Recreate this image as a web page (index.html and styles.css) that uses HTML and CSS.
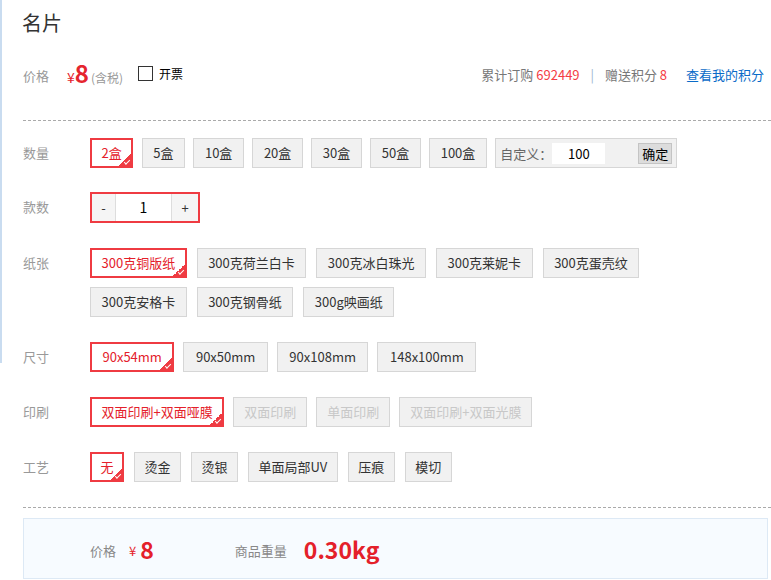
FILE: index.html
```html
<!DOCTYPE html>
<html lang="zh-CN">
<head>
    <meta charset="UTF-8">
    <meta name="viewport" content="width=device-width, initial-scale=1.0">
    <title>名片</title>
    <link rel="stylesheet" href="styles.css">
</head>
<body>
    <div class="page">
        <h1 class="title">名片</h1>

        <div class="summary">
            <span class="summary-label">价格</span>
            <span class="price"><i>¥</i><b>8</b><em>(含税)</em></span>
            <label class="invoice"><span class="checkbox"></span>开票</label>
            <div class="stats">
                累计订购 <span class="red">692449</span>
                <span class="sep">|</span>
                赠送积分 <span class="red">8</span>
                <a class="link" href="#">查看我的积分</a>
            </div>
        </div>

        <div class="divider"></div>

        <!-- 数量 -->
        <div class="opt-row first">
            <div class="opt-label">数量</div>
            <div class="opt-list qty">
                <span class="opt active">2盒</span>
                <span class="opt">5盒</span>
                <span class="opt">10盒</span>
                <span class="opt">20盒</span>
                <span class="opt">30盒</span>
                <span class="opt">50盒</span>
                <span class="opt">100盒</span>
                <div class="custom">
                    <span class="custom-label">自定义：</span>
                    <span class="custom-input">100</span>
                    <span class="custom-btn">确定</span>
                </div>
            </div>
        </div>

        <!-- 款数 -->
        <div class="opt-row second">
            <div class="opt-label">款数</div>
            <div class="stepper">
                <span class="step-btn minus">-</span>
                <span class="step-value">1</span>
                <span class="step-btn plus">+</span>
            </div>
        </div>

        <!-- 纸张 -->
        <div class="opt-row">
            <div class="opt-label">纸张</div>
            <div class="opt-list paper">
                <span class="opt active">300克铜版纸</span>
                <span class="opt">300克荷兰白卡</span>
                <span class="opt">300克冰白珠光</span>
                <span class="opt">300克莱妮卡</span>
                <span class="opt">300克蛋壳纹</span>
                <span class="opt">300克安格卡</span>
                <span class="opt">300克钢骨纸</span>
                <span class="opt">300g映画纸</span>
            </div>
        </div>

        <!-- 尺寸 -->
        <div class="opt-row">
            <div class="opt-label">尺寸</div>
            <div class="opt-list size">
                <span class="opt active">90x54mm</span>
                <span class="opt">90x50mm</span>
                <span class="opt">90x108mm</span>
                <span class="opt">148x100mm</span>
            </div>
        </div>

        <!-- 印刷 -->
        <div class="opt-row">
            <div class="opt-label">印刷</div>
            <div class="opt-list print">
                <span class="opt active">双面印刷+双面哑膜</span>
                <span class="opt disabled">双面印刷</span>
                <span class="opt disabled">单面印刷</span>
                <span class="opt disabled">双面印刷+双面光膜</span>
            </div>
        </div>

        <!-- 工艺 -->
        <div class="opt-row">
            <div class="opt-label">工艺</div>
            <div class="opt-list craft">
                <span class="opt active">无</span>
                <span class="opt">烫金</span>
                <span class="opt">烫银</span>
                <span class="opt">单面局部UV</span>
                <span class="opt">压痕</span>
                <span class="opt">模切</span>
            </div>
        </div>

        <div class="divider bottom"></div>

        <div class="total">
            <span class="total-label">价格</span>
            <span class="total-yen">¥</span>
            <span class="total-num">8</span>
            <span class="total-label weight">商品重量</span>
            <span class="total-num">0.30kg</span>
        </div>
    </div>
</body>
</html>
```

FILE: styles.css
```css
body {
    margin: 0;
    font-family: "Noto Sans CJK SC", "Noto Sans", sans-serif;
    font-size: 13px;
    color: #333;
    background: #fff;
}
body::before {
    content: "";
    position: absolute;
    left: 0;
    top: 0;
    width: 2px;
    height: 363px;
    background: #c9dcf0;
}
.page {
    padding: 10px 0 3px 23px;
}
.title {
    margin: 0 0 0 -1px;
    font-size: 20px;
    font-weight: normal;
    line-height: 26px;
    color: #333;
}

/* 价格 / 统计 */
.summary {
    display: flex;
    align-items: center;
    height: 30px;
    margin-top: 22px;
    padding-right: 7px;
}
.summary-label {
    width: 44px;
    color: #999;
    position: relative;
    top: 2px;
}
.price {
    display: flex;
    align-items: baseline;
    color: #e5252e;
}
.price i {
    font-style: normal;
    font-size: 14px;
}
.price b {
    font-size: 24px;
    line-height: 30px;
}
.price em {
    font-style: normal;
    font-size: 12px;
    color: #999;
    margin-left: 2px;
}
.invoice {
    display: flex;
    align-items: center;
    margin-left: 15px;
    font-size: 12px;
    color: #000;
}
.checkbox {
    width: 13px;
    height: 13px;
    border: 1px solid #333;
    margin-right: 6px;
    background: #fff;
}
.stats {
    margin-left: auto;
    color: #777;
    position: relative;
    top: 1px;
}
.red { color: #f43c45; }
.sep {
    color: #9bb5d0;
    margin: 0 8px;
}
.link {
    color: #0a6bc8;
    text-decoration: none;
    margin-left: 16px;
}
.divider {
    border-top: 1px dashed #aaa;
    margin-top: 32px;
}
.divider.bottom {
    margin-top: 25px;
}

/* 选项行 */
.opt-row {
    display: flex;
    margin-top: 25px;
}
.opt-row.first {
    margin-top: 17px;
}
.opt-row.second {
    margin-top: 24px;
}
.opt-label {
    width: 67px;
    flex-shrink: 0;
    line-height: 30px;
    color: #999;
}
.opt-list {
    display: flex;
    flex-wrap: wrap;
    gap: 9px 10px;
    max-width: 600px;
}
.opt {
    position: relative;
    box-sizing: border-box;
    height: 30px;
    line-height: 28px;
    padding: 0 10px;
    border: 1px solid #d6d6d6;
    background: #f1f1f1;
    color: #333;
    white-space: nowrap;
}
.opt.active {
    border: 2px solid #ef3b42;
    background: #fff;
    color: #e4202a;
    line-height: 26px;
    padding: 0 9px;
}
.qty, .size, .print { column-gap: 9px; }
.qty { column-gap: 8.5px; }
.qty .opt, .paper .opt { padding: 0 10.5px; }
.qty .opt.active, .paper .opt.active { padding: 0 9.5px; }
.size .opt { padding: 0 11.5px; }
.size .opt.active { padding: 0 10.5px; }
.print .opt.active { padding: 0 9.5px; }
.craft .opt { padding: 0 9.5px; }
.craft .opt.active { padding: 0 8.5px; }
.opt.active::after {
    content: "";
    position: absolute;
    right: 0;
    bottom: 0;
    width: 12px;
    height: 12px;
    background: linear-gradient(to bottom right, transparent 50%, #ef3b42 50%);
}
.opt.active::before {
    content: "";
    position: absolute;
    right: 1px;
    bottom: 3px;
    width: 5px;
    height: 2px;
    border-left: 1.5px solid #fff;
    border-bottom: 1.5px solid #fff;
    transform: rotate(-45deg);
    z-index: 1;
}
.opt.disabled {
    color: #c8c8c8;
}

/* 自定义数量 */
.custom {
    display: flex;
    align-items: center;
    box-sizing: border-box;
    height: 30px;
    width: 182px;
    padding: 0 4px;
    border: 1px solid #d6d6d6;
    background: #f1f1f1;
}
.custom-label {
    color: #666;
    width: 52px;
}
.custom-input {
    width: 53px;
    height: 21px;
    line-height: 21px;
    background: #fff;
    color: #000;
    text-align: center;
}
.custom-btn {
    margin-left: auto;
    box-sizing: border-box;
    height: 21px;
    line-height: 19px;
    padding: 0 3px;
    border: 1px solid #c4c4c4;
    background: #dcdcdc;
    color: #000;
}

/* 款数 */
.stepper {
    display: flex;
    box-sizing: border-box;
    width: 110px;
    height: 31px;
    border: 2px solid #ef3b42;
}
.step-btn {
    background: #f5f5f5;
    color: #333;
    text-align: center;
    line-height: 27px;
}
.minus {
    width: 23px;
    border-right: 1px solid #ddd;
}
.plus {
    width: 26px;
    border-left: 1px solid #ddd;
}
.step-value {
    flex: 1;
    text-align: center;
    line-height: 27px;
    color: #000;
    font-size: 14px;
}

/* 底部合计 */
.total {
    display: flex;
    align-items: center;
    box-sizing: border-box;
    height: 61px;
    margin: 10px 3px 0 0;
    padding-left: 66px;
    border: 1px solid #dde9f5;
    background: #f7fbff;
}
.total-label {
    color: #888;
    position: relative;
    top: 2px;
}
.total-yen {
    color: #e5252e;
    margin-left: 13px;
    font-size: 13px;
    position: relative;
    top: 2px;
}
.total-num {
    color: #e4202a;
    font-size: 23px;
    font-weight: bold;
    margin-left: 4px;
}
.total-label.weight {
    margin-left: 81px;
}
.weight + .total-num {
    margin-left: 17px;
}
```
